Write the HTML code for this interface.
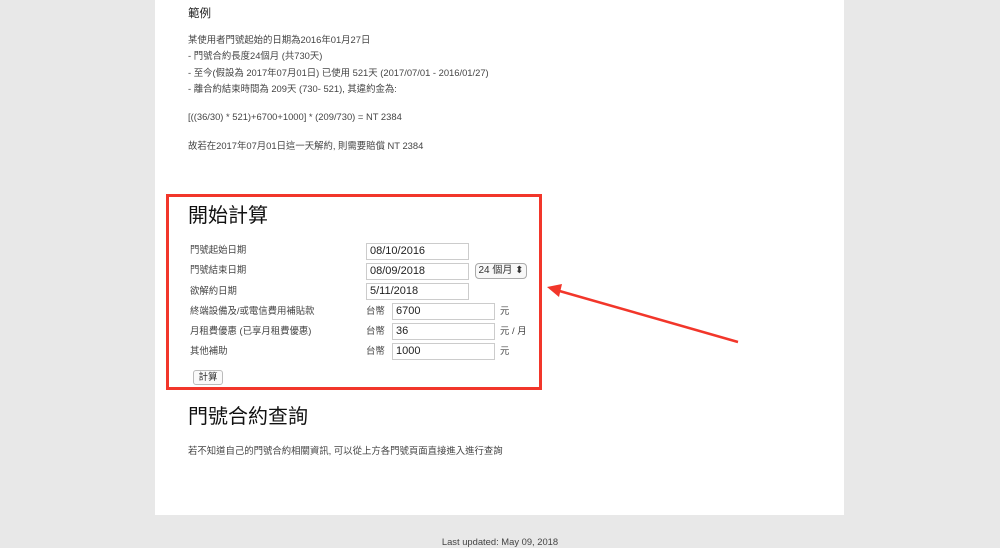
<!DOCTYPE html>
<html><head><meta charset="utf-8"><style>
body{margin:0;width:1000px;height:548px;background:#e8e8e8;position:relative;overflow:hidden;font-family:"Liberation Sans","Noto Sans CJK TC",sans-serif;color:#333;}
.panel{position:absolute;left:155px;top:0;width:689px;height:515px;background:#fff;}
.t{position:absolute;font-size:9.4px;white-space:nowrap;line-height:12px;color:#444;}
.h{position:absolute;font-size:20px;color:#111;white-space:nowrap;line-height:24px;}
.in{position:absolute;height:15px;border:1px solid #ccc;background:#fff;font-size:11px;line-height:15px;padding-left:3px;box-sizing:content-box;color:#222;}
.box{position:absolute;left:166px;top:194px;width:370px;height:190px;border:3px solid #f2362a;}
.btn{position:absolute;left:193px;top:370px;width:28px;height:13px;border:1px solid #bbb;border-radius:3px;font-size:9.5px;line-height:13px;text-align:center;background:#fafafa;}
.sel{position:absolute;left:475px;top:263px;width:50px;height:14px;border:1px solid #aaa;border-radius:4px;font-size:10px;line-height:14px;text-align:center;background:#f8f8f8;}
</style></head><body>
<div class="panel"></div>
<div class="t" style="left:188px;top:8px;font-size:11.5px;color:#222">範例</div>
<div class="t" style="left:188px;top:34px">某使用者門號起始的日期為2016年01月27日</div>
<div class="t" style="left:188px;top:50px">- 門號合約長度24個月 (共730天)</div>
<div class="t" style="left:188px;top:67px">- 至今(假設為 2017年07月01日) 已使用 521天 (2017/07/01 - 2016/01/27)</div>
<div class="t" style="left:188px;top:83px">- 離合約結束時間為 209天 (730- 521), 其違約金為:</div>
<div class="t" style="left:188px;top:111px">[((36/30) * 521)+6700+1000] * (209/730) = NT 2384</div>
<div class="t" style="left:188px;top:140px">故若在2017年07月01日這一天解約, 則需要賠償 NT 2384</div>
<div class="box"></div>
<div class="h" style="left:188px;top:204px">開始計算</div>
<div class="t" style="left:190px;top:244px">門號起始日期</div>
<div class="t" style="left:190px;top:264px">門號結束日期</div>
<div class="t" style="left:190px;top:285px">欲解約日期</div>
<div class="t" style="left:190px;top:305px">終端設備及/或電信費用補貼款</div>
<div class="t" style="left:190px;top:325px">月租費優惠 (已享月租費優惠)</div>
<div class="t" style="left:190px;top:345px">其他補助</div>
<div class="in" style="left:366px;top:243px;width:98px">08/10/2016</div>
<div class="in" style="left:366px;top:263px;width:98px">08/09/2018</div>
<div class="in" style="left:366px;top:283px;width:98px">5/11/2018</div>
<div class="sel">24 個月 ⬍</div>
<div class="t" style="left:366px;top:305px">台幣</div>
<div class="t" style="left:366px;top:325px">台幣</div>
<div class="t" style="left:366px;top:345px">台幣</div>
<div class="in" style="left:392px;top:303px;width:98px">6700</div>
<div class="in" style="left:392px;top:323px;width:98px">36</div>
<div class="in" style="left:392px;top:343px;width:98px">1000</div>
<div class="t" style="left:500px;top:305px">元</div>
<div class="t" style="left:500px;top:325px">元 / 月</div>
<div class="t" style="left:500px;top:345px">元</div>
<div class="btn">計算</div>
<svg style="position:absolute;left:0;top:0" width="1000" height="548"><line x1="738" y1="342" x2="556" y2="290" stroke="#f2362a" stroke-width="2.5"/><polygon points="547,287 562,284 559,297" fill="#f2362a"/></svg>
<div class="h" style="left:188px;top:405px">門號合約查詢</div>
<div class="t" style="left:188px;top:445px">若不知道自己的門號合約相關資訊, 可以從上方各門號頁面直接進入進行查詢</div>
<div class="t" style="left:0;width:1000px;text-align:center;top:536px;color:#444">Last updated: May 09, 2018</div>
</body></html>
